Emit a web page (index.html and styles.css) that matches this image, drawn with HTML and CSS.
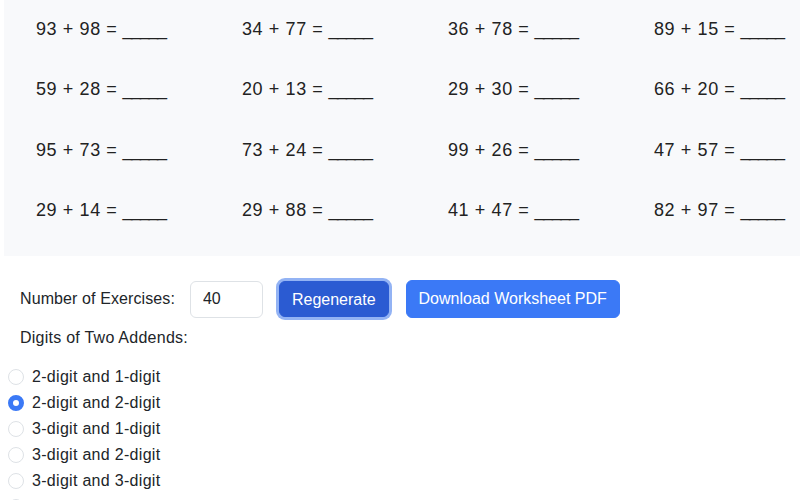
FILE: index.html
```html
<!DOCTYPE html>
<html>
<head>
<meta charset="utf-8">
<link rel="stylesheet" href="styles.css">
</head>
<body>
<div class="panel">
  <div class="grid">
    <div class="ex"><span class="expr">93 + 98 =</span> <span class="blank">_____</span></div>
    <div class="ex"><span class="expr">34 + 77 =</span> <span class="blank">_____</span></div>
    <div class="ex"><span class="expr">36 + 78 =</span> <span class="blank">_____</span></div>
    <div class="ex"><span class="expr">89 + 15 =</span> <span class="blank">_____</span></div>
    <div class="ex"><span class="expr">59 + 28 =</span> <span class="blank">_____</span></div>
    <div class="ex"><span class="expr">20 + 13 =</span> <span class="blank">_____</span></div>
    <div class="ex"><span class="expr">29 + 30 =</span> <span class="blank">_____</span></div>
    <div class="ex"><span class="expr">66 + 20 =</span> <span class="blank">_____</span></div>
    <div class="ex"><span class="expr">95 + 73 =</span> <span class="blank">_____</span></div>
    <div class="ex"><span class="expr">73 + 24 =</span> <span class="blank">_____</span></div>
    <div class="ex"><span class="expr">99 + 26 =</span> <span class="blank">_____</span></div>
    <div class="ex"><span class="expr">47 + 57 =</span> <span class="blank">_____</span></div>
    <div class="ex"><span class="expr">29 + 14 =</span> <span class="blank">_____</span></div>
    <div class="ex"><span class="expr">29 + 88 =</span> <span class="blank">_____</span></div>
    <div class="ex"><span class="expr">41 + 47 =</span> <span class="blank">_____</span></div>
    <div class="ex"><span class="expr">82 + 97 =</span> <span class="blank">_____</span></div>
  </div>
</div>
<div class="controls">
  <span class="label">Number of Exercises:</span>
  <input class="num" type="text" value="40">
  <button class="btn btn-regen">Regenerate</button>
  <button class="btn btn-dl">Download Worksheet PDF</button>
</div>
<div class="digits-label">Digits of Two Addends:</div>
<div class="radios">
  <div class="radio"><span class="circle"></span><span>2-digit and 1-digit</span></div>
  <div class="radio"><span class="circle checked"></span><span>2-digit and 2-digit</span></div>
  <div class="radio"><span class="circle"></span><span>3-digit and 1-digit</span></div>
  <div class="radio"><span class="circle"></span><span>3-digit and 2-digit</span></div>
  <div class="radio"><span class="circle"></span><span>3-digit and 3-digit</span></div>
  <div class="radio"><span class="circle"></span><span>4-digit and 1-digit</span></div>
</div>
</body>
</html>
```

FILE: styles.css
```css
html, body {
  margin: 0;
  padding: 0;
  overflow: hidden;
  background: #ffffff;
}
body {
  font-family: "Liberation Sans", Arial, Helvetica, sans-serif;
  font-size: 16px;
  color: #212529;
  width: 800px;
  height: 500px;
}
.panel {
  background: #f8f9fb;
  margin: -15px 0 0 4px;
  padding: 13.5px 0 15px 32px;
}
.grid {
  display: grid;
  grid-template-columns: repeat(4, 206px);
  grid-auto-rows: 60.67px;
}
.ex {
  font-size: 18px;
  line-height: 60.67px;
  color: #222222;
  white-space: nowrap;
}
.expr {
  letter-spacing: 0.6px;
}
.blank {
  letter-spacing: -1.4px;
}
.controls {
  display: flex;
  align-items: center;
  margin-top: 24px;
  padding-left: 20px;
  height: 38px;
}
.label {
  line-height: 24px;
  margin-right: 15px;
  letter-spacing: 0.1px;
}
.num {
  box-sizing: border-box;
  width: 73px;
  height: 37px;
  padding: 6px 12px;
  border: 1px solid #dee2e6;
  border-radius: 6px;
  font-family: inherit;
  font-size: 16px;
  color: #212529;
  background: #fff;
  outline: none;
  margin-right: 16px;
}
.btn {
  box-sizing: border-box;
  height: 38px;
  padding: 6px 12px;
  border: 1px solid transparent;
  border-radius: 6px;
  font-family: inherit;
  font-size: 16px;
  line-height: 24px;
  color: #ffffff;
  cursor: pointer;
}
.btn-regen {
  background: #2b5bd2;
  border-color: #2b5bd2;
  height: 36px;
  box-shadow: 0 0 0 3px #93b3f4;
  margin-right: 17px;
}
.btn-dl {
  background: #3b79f6;
  border-color: #3b79f6;
}
.digits-label {
  margin-top: 8px;
  padding-left: 20px;
  line-height: 24px;
  letter-spacing: 0.25px;
}
.radios {
  margin-top: 13.5px;
  padding-left: 7.5px;
}
.radio {
  display: flex;
  align-items: center;
  height: 26px;
  letter-spacing: 0.3px;
}
.circle {
  box-sizing: border-box;
  width: 16px;
  height: 16px;
  border-radius: 50%;
  border: 1px solid #dee2e6;
  background: #fff;
  margin-right: 8.5px;
  flex: none;
}
.circle.checked {
  border: 5px solid #3b79f6;
  background: #ffffff;
}
```
